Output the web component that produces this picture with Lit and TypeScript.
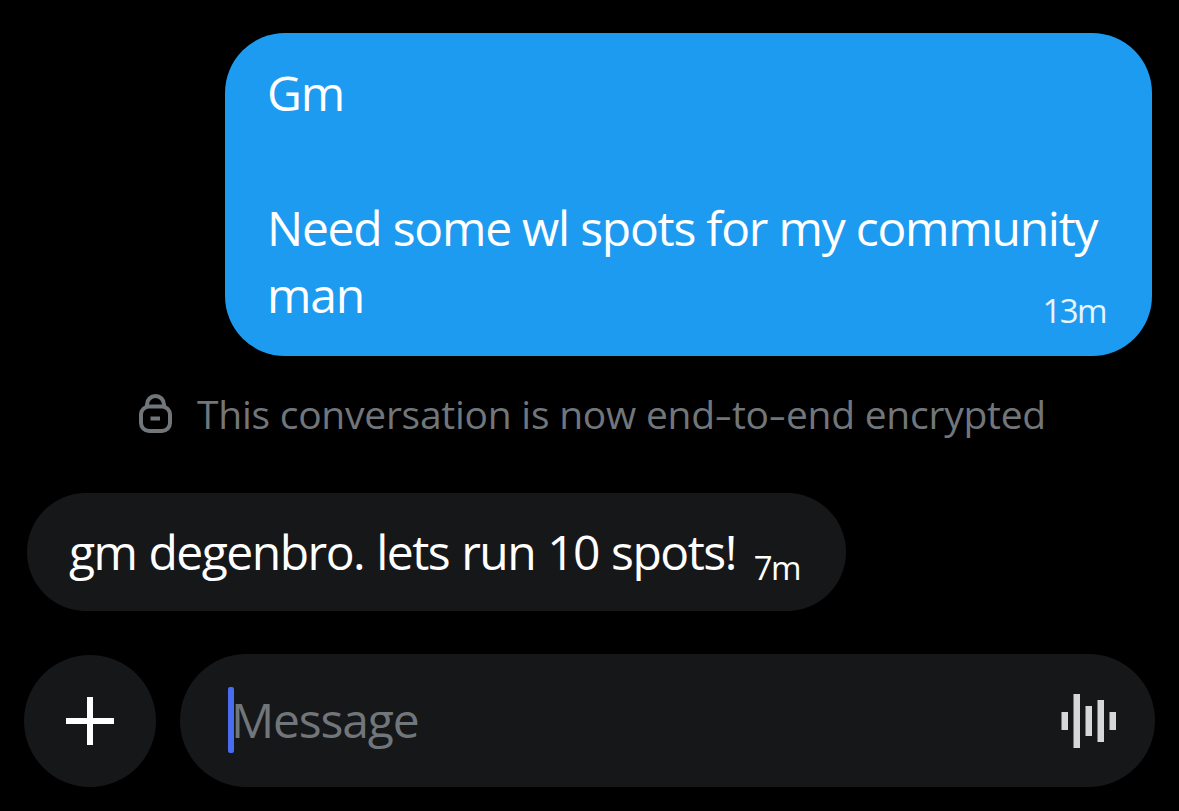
import { LitElement, html, css } from 'lit';
import { customElement, property } from 'lit/decorators.js';

/**
 * One chat bubble. The age sits on the last line of the text.
 *
 * @prop {string} text
 * @prop {string} time
 * @prop {boolean} own - Sent by the current user
 */
@customElement('chat-bubble')
class ChatBubble extends LitElement {
  @property() text = '';
  @property() time = '';
  @property({ type: Boolean, reflect: true }) own = false;

  static styles = css`
    :host { display: flex; }
    :host([own]) { justify-content: flex-end; }

    .bubble {
      box-sizing: border-box;
      width: 819px;
      height: 118px;
      padding: 25px 46px 0 42px;
      border-radius: 60px;
      background: #161719;
      color: #fff;
      font-size: 48px;
      line-height: 67.5px;
      letter-spacing: -1.5px;
      word-spacing: 1px;
      white-space: nowrap;
    }

    :host([own]) .bubble {
      width: 927px;
      height: 322.5px;
      padding-top: 25.5px;
      background: #1d9bf0;
      letter-spacing: -1.24px;
      word-spacing: 0;
    }

    .line {
      display: flex;
      justify-content: space-between;
      height: 67.5px;
    }

    .time {
      padding-top: 31.5px;
      font-size: 33px;
      line-height: 36px;
      letter-spacing: -1.6px;
    }

    :host([own]) .time { color: #e8f5fe; }
  `;

  render() {
    const lines = this.text.split('\n');
    return html`
      <div class="bubble">
        ${lines.map((line, i) => html`
          <div class="line">
            <span>${line}</span>
            ${i === lines.length - 1 ? html`<span class="time">${this.time}</span>` : ''}
          </div>
        `)}
      </div>
    `;
  }
}

@customElement('message-composer')
class MessageComposer extends LitElement {
  static styles = css`
    :host {
      display: flex;
      align-items: center;
      gap: 24px;
    }

    .add {
      display: flex;
      width: 132px;
      height: 132px;
      border-radius: 50%;
      background: #161719;
    }

    .field {
      box-sizing: border-box;
      display: flex;
      align-items: center;
      width: 975px;
      height: 133px;
      padding: 0 38px 0 48px;
      border-radius: 67px;
      background: #161719;
    }

    .caret {
      width: 6px;
      height: 66px;
      margin: 0 -3px 1px 0;
      border-radius: 2px;
      background: #4a6cf0;
      z-index: 1;
    }

    .placeholder {
      flex: 1;
      margin-bottom: 2px;
      color: #71767b;
      font-size: 48px;
      line-height: 66px;
      letter-spacing: -1.15px;
    }

    svg { display: block; }
  `;

  render() {
    return html`
      <div class="add">
        <svg width="132" height="132" viewBox="0 0 132 132" fill="#fff">
          <path d="M63 42h6v21h21v6H69v21h-6V69H42v-6h21z" />
        </svg>
      </div>
      <div class="field">
        <span class="caret"></span>
        <span class="placeholder">Message</span>
        <svg width="56" height="56" viewBox="0 0 56 56" fill="#d6d7d9">
          <rect x="0.5" y="19" width="6.5" height="18" />
          <rect x="12.5" y="1" width="6.5" height="54" />
          <rect x="24.5" y="13" width="6.5" height="30" />
          <rect x="36.5" y="7" width="6.5" height="42" />
          <rect x="48.5" y="19" width="6.5" height="18" />
        </svg>
      </div>
    `;
  }
}

@customElement('app-root')
class AppRoot extends LitElement {
  static styles = css`
    :host {
      box-sizing: border-box;
      display: flex;
      flex-direction: column;
      width: 1179px;
      height: 811px;
      padding: 33px 24px 0;
      overflow: hidden;
      background: #000;
      font-family: 'Open Sans', 'Noto Sans', sans-serif;
    }

    .sent { margin-right: 3px; }
    .received { margin-left: 3px; }

    .notice {
      display: flex;
      align-items: center;
      gap: 24px;
      height: 137.5px;
      padding-left: 114px;
      color: #71767b;
      font-size: 39px;
      letter-spacing: -0.25px;
      white-space: nowrap;
    }

    .notice svg { margin-bottom: 20px; }
    .notice p { margin: 0 0 21px; }

    .hyphen {
      display: inline-block;
      margin: 0 2.4px;
      transform: scaleX(1.4);
    }

    message-composer { margin-top: 43px; }
  `;

  render() {
    return html`
      <chat-bubble
        class="sent"
        own
        .text=${'Gm\n\nNeed some wl spots for my community\nman'}
        time="13m"
      ></chat-bubble>
      <div class="notice">
        <svg width="35" height="40" viewBox="0 0 35 40" fill="none" stroke="#71767b" stroke-width="4">
          <rect x="3" y="12.500" width="29" height="24.500" rx="8" />
          <path d="M9 12.500v-2a8.500 8.500 0 0 1 17 0v2" />
          <path d="M12.500 24.500h9.500" />
        </svg>
        <p>This conversation is now end<span class="hyphen">-</span>to<span class="hyphen">-</span>end encrypted</p>
      </div>
      <chat-bubble class="received" text="gm degenbro. lets run 10 spots!" time="7m"></chat-bubble>
      <message-composer></message-composer>
    `;
  }
}
